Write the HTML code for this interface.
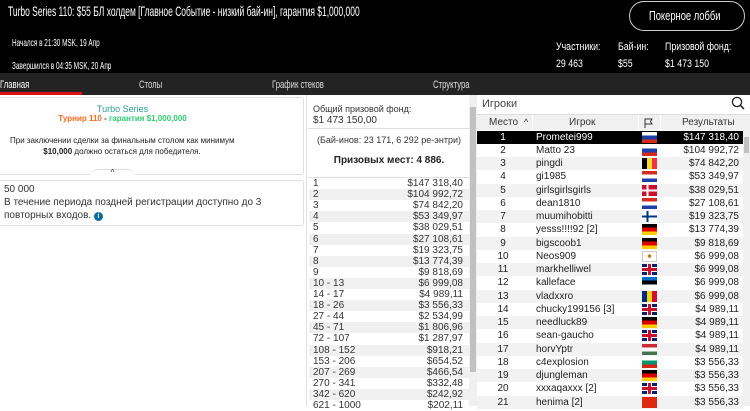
<!DOCTYPE html>
<html><head><meta charset="utf-8"><style>
*{margin:0;padding:0;box-sizing:border-box}
body{width:750px;height:406px;overflow:hidden;background:#fff;font-family:"Liberation Sans",sans-serif;position:relative;color:#222}
.a{position:absolute;white-space:nowrap}
.n{transform-origin:0 0}
#hdr{position:absolute;left:0;top:0;width:750px;height:73px;background:#000;color:#fff}
#tabs{position:absolute;left:0;top:73px;width:750px;height:22px;background:#232323;color:#ddd;font-size:11px}
.pr{position:absolute;left:309px;width:160px;height:11px;font-size:10px;line-height:11px;color:#333}
.pr span{position:absolute;right:6px}
.pr b{font-weight:normal;position:absolute;left:4px}
.row{position:absolute;left:477px;width:266px;height:13.25px;font-size:10px;line-height:13px;color:#222}
.row .p{position:absolute;left:0;width:52px;text-align:center}
.row .nm{position:absolute;left:59px}
.row .f{position:absolute;left:165px;top:1px;width:15px;height:11px}
.row .r{position:absolute;right:4px}
.g{background:#f2f2f2}
.sel{background:#000;color:#fff}
</style></head><body>
<div id="hdr">
<div class="a n" style="left:8px;top:3px;font-size:14px;transform:scaleX(0.605)">Turbo Series 110: $55 БЛ холдем [Главное Событие - низкий бай-ин], гарантия $1,000,000</div>
<div class="a" style="left:629px;top:1px;width:116px;height:30px;border:1px solid #ccc;border-radius:15px"></div>
<div class="a n" style="left:649px;top:8px;font-size:13px;transform:scaleX(0.72)">Покерное лобби</div>
<div class="a n" style="left:12px;top:38px;font-size:10px;transform:scaleX(0.64)">Начался в 21:30 MSK, 19 Апр</div>
<div class="a n" style="left:12px;top:61px;font-size:10px;transform:scaleX(0.64)">Завершился в 04:35 MSK, 20 Апр</div>
<div class="a n" style="left:556px;top:41px;font-size:11px;transform:scaleX(0.8)">Участники:</div>
<div class="a n" style="left:618px;top:41px;font-size:11px;transform:scaleX(0.8)">Бай-ин:</div>
<div class="a n" style="left:665px;top:41px;font-size:11px;transform:scaleX(0.8)">Призовой фонд:</div>
<div class="a n" style="left:556px;top:58px;font-size:11px;transform:scaleX(0.8)">29 463</div>
<div class="a n" style="left:618px;top:58px;font-size:11px;transform:scaleX(0.8)">$55</div>
<div class="a n" style="left:665px;top:58px;font-size:11px;transform:scaleX(0.8)">$1 473 150</div>
</div>
<div id="tabs">
<div class="a n" style="left:0;top:6px;color:#fff;transform:scaleX(0.7)">Главная</div>
<div class="a" style="left:0;top:19px;width:82px;height:3px;background:#d11"></div>
<div class="a n" style="left:139px;top:6px;transform:scaleX(0.7)">Столы</div>
<div class="a n" style="left:272px;top:6px;transform:scaleX(0.7)">График стеков</div>
<div class="a n" style="left:433px;top:6px;transform:scaleX(0.7)">Структура</div>
</div>
<!-- left -->
<div class="a" style="left:-2px;top:97px;width:306px;height:78px;border:1px solid #e0e0e0;border-radius:3px"></div>
<div class="a" style="left:0;top:104px;width:245px;text-align:center;font-size:9px;color:#2a9d8f">Turbo Series</div>
<div class="a" style="left:0;top:114px;width:245px;text-align:center;font-size:8px;font-weight:bold;color:#ff6a1a">Турнир 110 <span style="color:#333">-</span> <span style="color:#2ecc71">гарантия $1,000,000</span></div>
<div class="a" style="left:10px;top:136px;width:224px;text-align:center;font-size:8px;color:#222">При заключении сделки за финальным столом как минимум</div>
<div class="a" style="left:10px;top:147px;width:224px;text-align:center;font-size:8px;color:#222"><b>$10,000</b> должно остаться для победителя.</div>
<div class="a" style="left:90px;top:169px;width:45px;height:8px;background:#fff;border-top:1px solid #ddd;border-radius:8px 8px 0 0;font-size:8px;text-align:center;line-height:6px">^</div>
<div class="a" style="left:-2px;top:180px;width:306px;height:46px;border:1px solid #e0e0e0;border-radius:3px"></div>
<div class="a" style="left:4px;top:183px;font-size:10px;line-height:13px;color:#333;white-space:normal;width:280px">50 000<br>В течение периода поздней регистрации доступно до 3<br>повторных входов. <span style="display:inline-block;width:9px;height:9px;border-radius:50%;background:#0a6e9c;color:#fff;font-size:7px;line-height:9px;text-align:center;font-weight:bold">i</span></div>
<div class="a" style="left:306px;top:95px;width:1px;height:311px;background:#e0e0e0"></div>
<!-- middle -->
<div class="a" style="left:313px;top:104px;font-size:9px;color:#333">Общий призовой фонд:</div>
<div class="a" style="left:313px;top:115px;font-size:10px;color:#333">$1 473 150,00</div>
<div class="a" style="left:308px;top:128px;width:162px;height:1px;background:#ddd"></div>
<div class="a" style="left:308px;top:135px;width:162px;text-align:center;font-size:9px;color:#333">(Бай-инов: 23 171, 6 292 ре-энтри)</div>
<div class="a" style="left:308px;top:155px;width:162px;text-align:center;font-size:10px;font-weight:bold">Призовых мест: 4 886.</div>
<div class="a" style="left:308px;top:177px;width:162px;height:1px;background:#ddd"></div>
<div style="position:absolute;left:0;top:178px">
<div class="pr" style="top:0"><b>1</b><span>$147 318,40</span></div>
<div class="pr" style="top:11.1px;background:#f0f0f0"><b>2</b><span>$104 992,72</span></div>
<div class="pr" style="top:22.2px"><b>3</b><span>$74 842,20</span></div>
<div class="pr" style="top:33.3px;background:#f0f0f0"><b>4</b><span>$53 349,97</span></div>
<div class="pr" style="top:44.4px"><b>5</b><span>$38 029,51</span></div>
<div class="pr" style="top:55.5px;background:#f0f0f0"><b>6</b><span>$27 108,61</span></div>
<div class="pr" style="top:66.6px"><b>7</b><span>$19 323,75</span></div>
<div class="pr" style="top:77.7px;background:#f0f0f0"><b>8</b><span>$13 774,39</span></div>
<div class="pr" style="top:88.8px"><b>9</b><span>$9 818,69</span></div>
<div class="pr" style="top:99.9px;background:#f0f0f0"><b>10 - 13</b><span>$6 999,08</span></div>
<div class="pr" style="top:111px"><b>14 - 17</b><span>$4 989,11</span></div>
<div class="pr" style="top:122.1px;background:#f0f0f0"><b>18 - 26</b><span>$3 556,33</span></div>
<div class="pr" style="top:133.2px"><b>27 - 44</b><span>$2 534,99</span></div>
<div class="pr" style="top:144.3px;background:#f0f0f0"><b>45 - 71</b><span>$1 806,96</span></div>
<div class="pr" style="top:155.4px"><b>72 - 107</b><span>$1 287,97</span></div>
<div class="pr" style="top:166.5px;background:#f0f0f0"><b>108 - 152</b><span>$918,21</span></div>
<div class="pr" style="top:177.6px"><b>153 - 206</b><span>$654,52</span></div>
<div class="pr" style="top:188.7px;background:#f0f0f0"><b>207 - 269</b><span>$466,54</span></div>
<div class="pr" style="top:199.8px"><b>270 - 341</b><span>$332,48</span></div>
<div class="pr" style="top:210.9px;background:#f0f0f0"><b>342 - 620</b><span>$242,92</span></div>
<div class="pr" style="top:222px"><b>621 - 1000</b><span>$202,11</span></div>
</div>
<div class="a" style="left:469px;top:95px;width:8px;height:311px;background:#f0f0f0"></div>
<div class="a" style="left:470px;top:107px;width:6px;height:265px;background:#c1c1c1"></div>
<!-- right -->
<div class="a" style="left:482px;top:98px;font-size:11px;color:#444">Игроки</div>
<svg class="a" style="left:731px;top:96px" width="14" height="14" viewBox="0 0 14 14"><circle cx="6" cy="6" r="4.6" fill="none" stroke="#222" stroke-width="1.3"/><line x1="9.3" y1="9.3" x2="13" y2="13" stroke="#222" stroke-width="1.5"/></svg>
<div class="a" style="left:477px;top:114px;width:273px;height:16px;background:#f0f0f0;border-top:1px solid #ddd;font-size:10px;line-height:15px;color:#333">
<span class="a" style="left:12px">Место</span><span class="a" style="left:47px;font-size:9px">^</span>
<span class="a" style="left:55px;top:0;width:1px;height:16px;background:#fff"></span>
<span class="a" style="left:92px">Игрок</span>
<span class="a" style="left:161px;top:0;width:1px;height:16px;background:#fff"></span>
<svg class="a" style="left:166px;top:3px" width="12" height="10"><path d="M2 10V1h7l-1.5 2.5L9 6H2" fill="none" stroke="#333" stroke-width="1"/></svg>
<span class="a" style="left:183px;top:0;width:1px;height:16px;background:#fff"></span>
<span class="a" style="left:205px">Результаты</span>
</div>
<div class="a" style="left:743px;top:130px;width:7px;height:276px;background:#f0f0f0"></div>
<div class="a" style="left:744px;top:137px;width:5px;height:16px;background:#c1c1c1"></div>
<div style="position:absolute;left:0;top:130.5px">
<div class="row sel" style="top:0"><span class="p">1</span><span class="nm">Prometei999</span><span class="f" style="background:linear-gradient(#fff 33%,#1c3fa8 33% 66%,#d52b1e 66%)"></span><span class="r">$147 318,40</span></div>
<div class="row" style="top:13.25px"><span class="p">2</span><span class="nm">Matto 23</span><span class="f" style="background:linear-gradient(#fff 33%,#1c3fa8 33% 66%,#d52b1e 66%)"></span><span class="r">$104 992,72</span></div>
<div class="row g" style="top:26.5px"><span class="p">3</span><span class="nm">pingdi</span><span class="f" style="background:linear-gradient(90deg,#000 33%,#fdda24 33% 66%,#ef3340 66%)"></span><span class="r">$74 842,20</span></div>
<div class="row" style="top:39.75px"><span class="p">4</span><span class="nm">gi1985</span><span class="f" style="background:linear-gradient(#d52b1e 33%,#fff 33% 66%,#1c3fa8 66%)"></span><span class="r">$53 349,97</span></div>
<div class="row g" style="top:53px"><span class="p">5</span><span class="nm">girlsgirlsgirls</span><span class="f" style="background:linear-gradient(90deg,transparent 30%,#fff 30% 45%,transparent 45%),linear-gradient(transparent 40%,#fff 40% 60%,transparent 60%),#c8102e"></span><span class="r">$38 029,51</span></div>
<div class="row" style="top:66.25px"><span class="p">6</span><span class="nm">dean1810</span><span class="f" style="background:linear-gradient(#d52b1e 33%,#fff 33% 66%,#1c3fa8 66%)"></span><span class="r">$27 108,61</span></div>
<div class="row g" style="top:79.5px"><span class="p">7</span><span class="nm">muumihobitti</span><span class="f" style="background:linear-gradient(90deg,transparent 30%,#003580 30% 45%,transparent 45%),linear-gradient(transparent 40%,#003580 40% 60%,transparent 60%),#fff"></span><span class="r">$19 323,75</span></div>
<div class="row" style="top:92.75px"><span class="p">8</span><span class="nm">yesss!!!!92 [2]</span><span class="f" style="background:linear-gradient(#000 33%,#d00 33% 66%,#ffce00 66%)"></span><span class="r">$13 774,39</span></div>
<div class="row g" style="top:106px"><span class="p">9</span><span class="nm">bigscoob1</span><span class="f" style="background:linear-gradient(#000 33%,#d00 33% 66%,#ffce00 66%)"></span><span class="r">$9 818,69</span></div>
<div class="row" style="top:119.25px"><span class="p">10</span><span class="nm">Neos909</span><span class="f" style="background:radial-gradient(circle at 50% 45%,#d57800 20%,#fff 24%);border:1px solid #ccc"></span><span class="r">$6 999,08</span></div>
<div class="row g" style="top:132.5px"><span class="p">11</span><span class="nm">markhelliwel</span><span class="f" style="background:linear-gradient(90deg,transparent 40%,#c8102e 40% 60%,transparent 60%),linear-gradient(transparent 38%,#c8102e 38% 62%,transparent 62%),linear-gradient(90deg,transparent 33%,#fff 33% 67%,transparent 67%),linear-gradient(transparent 28%,#fff 28% 72%,transparent 72%),#012169"></span><span class="r">$6 999,08</span></div>
<div class="row" style="top:145.75px"><span class="p">12</span><span class="nm">kalleface</span><span class="f" style="background:linear-gradient(#0072ce 33%,#000 33% 66%,#fff 66%)"></span><span class="r">$6 999,08</span></div>
<div class="row g" style="top:159px"><span class="p">13</span><span class="nm">vladxxro</span><span class="f" style="background:linear-gradient(90deg,#002b7f 33%,#fcd116 33% 66%,#ce1126 66%)"></span><span class="r">$6 999,08</span></div>
<div class="row" style="top:172.25px"><span class="p">14</span><span class="nm">chucky199156 [3]</span><span class="f" style="background:linear-gradient(90deg,transparent 40%,#c8102e 40% 60%,transparent 60%),linear-gradient(transparent 38%,#c8102e 38% 62%,transparent 62%),linear-gradient(90deg,transparent 33%,#fff 33% 67%,transparent 67%),linear-gradient(transparent 28%,#fff 28% 72%,transparent 72%),#012169"></span><span class="r">$4 989,11</span></div>
<div class="row g" style="top:185.5px"><span class="p">15</span><span class="nm">needluck89</span><span class="f" style="background:linear-gradient(#000 33%,#d00 33% 66%,#ffce00 66%)"></span><span class="r">$4 989,11</span></div>
<div class="row" style="top:198.75px"><span class="p">16</span><span class="nm">sean-gaucho</span><span class="f" style="background:linear-gradient(90deg,transparent 40%,#c8102e 40% 60%,transparent 60%),linear-gradient(transparent 38%,#c8102e 38% 62%,transparent 62%),linear-gradient(90deg,transparent 33%,#fff 33% 67%,transparent 67%),linear-gradient(transparent 28%,#fff 28% 72%,transparent 72%),#012169"></span><span class="r">$4 989,11</span></div>
<div class="row g" style="top:212px"><span class="p">17</span><span class="nm">horvYptr</span><span class="f" style="background:linear-gradient(#ce2939 33%,#fff 33% 66%,#477050 66%)"></span><span class="r">$4 989,11</span></div>
<div class="row" style="top:225.25px"><span class="p">18</span><span class="nm">c4explosion</span><span class="f" style="background:linear-gradient(#fff 33%,#00966e 33% 66%,#d62612 66%)"></span><span class="r">$3 556,33</span></div>
<div class="row g" style="top:238.5px"><span class="p">19</span><span class="nm">djungleman</span><span class="f" style="background:linear-gradient(#000 33%,#d00 33% 66%,#ffce00 66%)"></span><span class="r">$3 556,33</span></div>
<div class="row" style="top:251.75px"><span class="p">20</span><span class="nm">xxxaqaxxx [2]</span><span class="f" style="background:linear-gradient(90deg,transparent 40%,#c8102e 40% 60%,transparent 60%),linear-gradient(transparent 38%,#c8102e 38% 62%,transparent 62%),linear-gradient(90deg,transparent 33%,#fff 33% 67%,transparent 67%),linear-gradient(transparent 28%,#fff 28% 72%,transparent 72%),#012169"></span><span class="r">$3 556,33</span></div>
<div class="row g" style="top:265px"><span class="p">21</span><span class="nm">henima [2]</span><span class="f" style="background:#de2910"></span><span class="r">$3 556,33</span></div>
</div>
</body></html>
